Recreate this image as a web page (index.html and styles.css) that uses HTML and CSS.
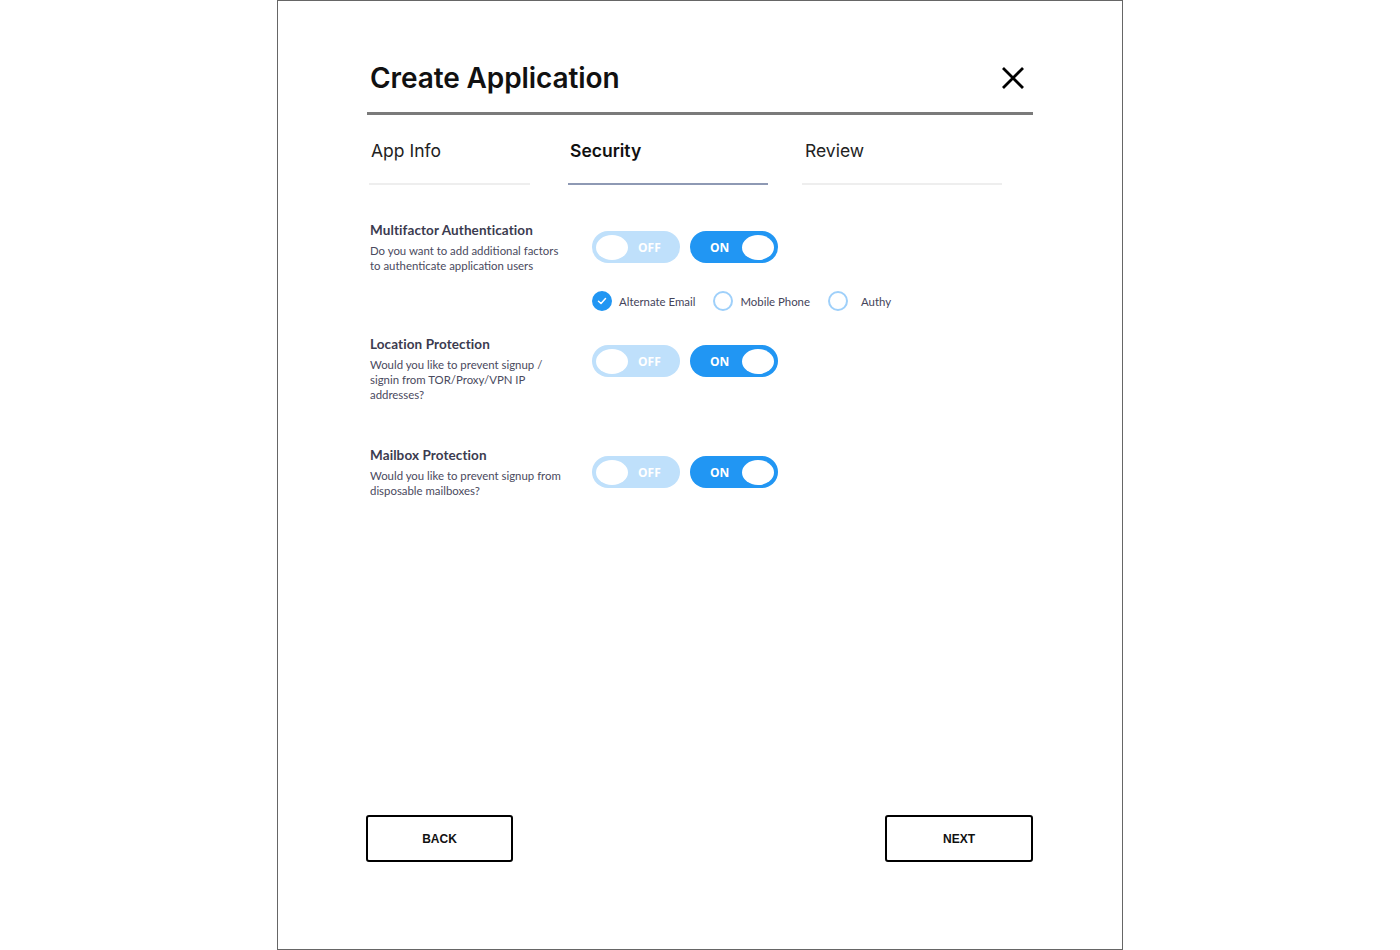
FILE: index.html
```html
<!DOCTYPE html>
<html>
<head>
<meta charset="utf-8">
<link rel="stylesheet" href="styles.css">
</head>
<body>
<div class="frame">
  <div class="header">
    <h1 class="title">Create Application</h1>
    <button class="close" aria-label="Close">
      <svg width="24" height="24" viewBox="0 0 24 24"><path d="M2 2 L22 22 M22 2 L2 22" stroke="#000" stroke-width="2.8" fill="none"/></svg>
    </button>
  </div>
  <div class="tabs">
    <div class="tab tab-1">App Info</div>
    <div class="tab tab-2 active">Security</div>
    <div class="tab tab-3">Review</div>
  </div>

  <div class="setting s1">
    <div class="label">
      <div class="label-title">Multifactor Authentication</div>
      <div class="label-desc">Do you want to add additional factors to authenticate application users</div>
    </div>
    <div class="controls">
      <div class="toggles">
        <div class="toggle off"><span class="knob"></span><span class="ttext">OFF</span></div>
        <div class="toggle on"><span class="ttext">ON</span><span class="knob"></span></div>
      </div>
    </div>
  </div>
  <div class="checks">
    <div class="check checked"><span class="circle"><svg width="12" height="12" viewBox="0 0 12 12"><path d="M2.5 6.2 L5 8.5 L9.5 3.6" stroke="#fff" stroke-width="1.5" fill="none" stroke-linecap="round" stroke-linejoin="round"/></svg></span><span class="clabel">Alternate Email</span></div>
    <div class="check c2"><span class="circle"></span><span class="clabel">Mobile Phone</span></div>
    <div class="check c3"><span class="circle"></span><span class="clabel">Authy</span></div>
  </div>

  <div class="setting s2">
    <div class="label">
      <div class="label-title">Location Protection</div>
      <div class="label-desc">Would you like to prevent signup / signin from TOR/Proxy/VPN IP addresses?</div>
    </div>
    <div class="controls">
      <div class="toggles">
        <div class="toggle off"><span class="knob"></span><span class="ttext">OFF</span></div>
        <div class="toggle on"><span class="ttext">ON</span><span class="knob"></span></div>
      </div>
    </div>
  </div>

  <div class="setting s3">
    <div class="label">
      <div class="label-title">Mailbox Protection</div>
      <div class="label-desc">Would you like to prevent signup from disposable mailboxes?</div>
    </div>
    <div class="controls">
      <div class="toggles">
        <div class="toggle off"><span class="knob"></span><span class="ttext">OFF</span></div>
        <div class="toggle on"><span class="ttext">ON</span><span class="knob"></span></div>
      </div>
    </div>
  </div>

  <div class="spacer"></div>
  <div class="footer">
    <button class="btn btn-back">BACK</button>
    <button class="btn btn-next">NEXT</button>
  </div>
</div>
</body>
</html>
```

FILE: styles.css
```css
* { box-sizing: border-box; }
html, body { margin: 0; padding: 0; background: #fff; }
body { width: 1400px; height: 950px; overflow: hidden; }

.frame {
  margin-left: 277px;
  width: 846px;
  height: 950px;
  border: 1px solid #666;
  padding: 0 89px 87px 89px;
  display: flex;
  flex-direction: column;
}

.header {
  display: flex;
  align-items: center;
  justify-content: space-between;
  height: 114px;
  padding: 58px 8px 0 3px;
  border-bottom: 3px solid #7a7a7a;
}
.title {
  margin: 0;
  font-family: Inter, "Noto Sans", sans-serif;
  font-weight: 600;
  font-size: 28px;
  letter-spacing: -0.1px;
  color: #111;
  line-height: 40px;
  position: relative;
  top: -8px;
}
.close {
  border: 0;
  background: none;
  padding: 0;
  width: 24px;
  height: 24px;
  position: relative;
  top: -8px;
}

.tabs {
  display: flex;
  margin-top: 24px;
  padding-left: 2px;
  height: 46px;
}
.tab {
  font-family: Inter, "Noto Sans", sans-serif;
  font-size: 17.5px;
  color: #222;
  border-bottom: 2px solid #eeeeee;
  padding-left: 2px;
  line-height: 24px;
}
.tab-1 { width: 161px; }
.tab-2 { width: 200px; margin-left: 38px; font-weight: 600; color: #111; border-bottom-color: #8e99b4; }
.tab-3 { width: 200px; margin-left: 34px; padding-left: 3px; }

.setting {
  display: flex;
  padding-left: 3px;
}
.s1 { margin-top: 36px; }
.s2 { margin-top: 24px; }
.s3 { margin-top: 44px; }

.label { width: 222px; }
.label-title {
  font-family: Lato, "Noto Sans", sans-serif;
  font-weight: 700;
  font-size: 13.5px;
  letter-spacing: 0.1px;
  color: #3b3b4f;
  line-height: 18px;
}
.label-desc {
  font-family: Lato, "Noto Sans", sans-serif;
  font-size: 11.4px;
  color: #4a4a5e;
  line-height: 15px;
  margin-top: 4px;
  width: 196px;
}
.controls { padding-top: 10px; }
.toggles { display: flex; gap: 10px; }

.toggle {
  width: 88px;
  height: 32px;
  border-radius: 16px;
  display: flex;
  align-items: center;
  padding: 0 4px;
  font-family: "Open Sans", "Noto Sans", sans-serif;
  font-weight: 700;
  font-size: 12px;
  color: #fff;
}
.toggle.off { background: #bfe0fb; }
.toggle.on { background: #2196f3; padding-left: 20px; justify-content: space-between; }
.knob {
  width: 32px;
  height: 25px;
  border-radius: 50%;
  background: #fff;
  display: block;
}
.toggle.off .ttext { margin-left: 10px; }

.checks {
  display: flex;
  align-items: center;
  height: 20px;
  margin-left: 225px;
  margin-top: 18px;
  font-family: Lato, "Noto Sans", sans-serif;
  font-size: 11.4px;
  color: #44445a;
}
.check { display: flex; align-items: center; }
.circle {
  width: 20px;
  height: 20px;
  border-radius: 50%;
  border: 2px solid #9fd0fa;
  background: #fff;
  display: flex;
  align-items: center;
  justify-content: center;
}
.check.checked .circle { background: #2196f3; border-color: #2196f3; }
.clabel { margin-left: 7px; }
.c2 { margin-left: 18px; }
.c3 { margin-left: 18px; }
.c3 .clabel { margin-left: 13px; }

.spacer { flex: 1; }
.footer {
  display: flex;
  justify-content: space-between;
}
.btn {
  height: 47px;
  border: 2px solid #000;
  border-radius: 3px;
  background: #fff;
  font-family: "Liberation Sans", Arial, sans-serif;
  font-weight: 700;
  font-size: 12px;
  color: #111;
}
.btn-back { width: 147px; margin-left: -1px; }
.btn-next { width: 148px; }
```
